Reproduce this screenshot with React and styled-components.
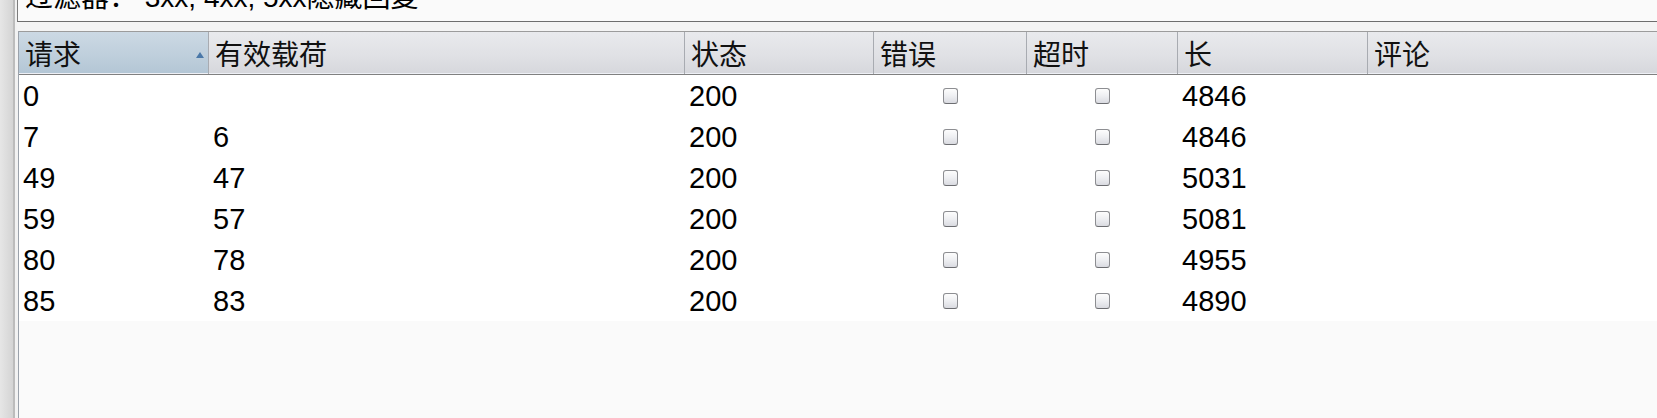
import React from "react"
import styled, { createGlobalStyle } from "styled-components"

const columns = [
  { key: "req", title: "请求", width: "190px", sorted: true },
  { key: "payload", title: "有效载荷", width: "476px" },
  { key: "status", title: "状态", width: "189px" },
  { key: "error", title: "错误", width: "153px", check: true },
  { key: "timeout", title: "超时", width: "151px", check: true },
  { key: "length", title: "长", width: "190px" },
  { key: "comment", title: "评论", width: "1fr" },
]

const rows = [
  { req: "0", payload: "", status: "200", length: "4846" },
  { req: "7", payload: "6", status: "200", length: "4846" },
  { req: "49", payload: "47", status: "200", length: "5031" },
  { req: "59", payload: "57", status: "200", length: "5081" },
  { req: "80", payload: "78", status: "200", length: "4955" },
  { req: "85", payload: "83", status: "200", length: "4890" },
]

const template = columns.map((c) => c.width).join(" ")

const App = () => {
  return (
    <>
      <GlobalStyle />
      <Window>
        <SideRail />
        <Main>
          <FilterBar>
            <FilterText>过滤器： 3xx, 4xx, 5xx隐藏回复</FilterText>
          </FilterBar>
          <Spacer />
          <Table>
            <HeaderRow>
              {columns.map((col) => (
                <HeaderCell key={col.key} sorted={col.sorted}>
                  {col.title}
                  {col.sorted ? <SortArrow /> : null}
                </HeaderCell>
              ))}
            </HeaderRow>
            {rows.map((row, index) => (
              <Row key={index}>
                {columns.map((col) =>
                  col.check ? (
                    <CheckCell key={col.key}>
                      <CheckBox />
                    </CheckCell>
                  ) : (
                    <Cell key={col.key}>{row[col.key]}</Cell>
                  )
                )}
              </Row>
            ))}
          </Table>
        </Main>
      </Window>
    </>
  )
}

export default App

const GlobalStyle = createGlobalStyle`
  body {
    margin: 0;
    background: #f0f0f0;
    font-family: "Liberation Sans", "Noto Sans CJK SC", sans-serif;
    overflow: hidden;
  }
`

const Window = styled.div`
  display: flex;
  width: 1657px;
  height: 418px;
  overflow: hidden;
`

const SideRail = styled.div`
  width: 17px;
  flex-shrink: 0;
  background: linear-gradient(
    to right,
    #e6e6e6 0px,
    #d4d4d4 13px,
    #bcbcbc 13px,
    #bcbcbc 15px,
    #f2f2f2 15px
  );
`

const Main = styled.div`
  flex: 1;
  display: flex;
  flex-direction: column;
  background: #f2f2f2;
  min-width: 0;
`

const FilterBar = styled.div`
  height: 21px;
  flex-shrink: 0;
  border-left: 1px solid #7c7c7c;
  border-bottom: 1px solid #6e6e6e;
  background: #fafafa;
  overflow: hidden;
  padding-left: 7px;
`

const FilterText = styled.div`
  font-size: 28px;
  line-height: 30px;
  margin-top: -17px;
  white-space: nowrap;
  color: #000;
`

const Spacer = styled.div`
  height: 9px;
  flex-shrink: 0;
  background: #f4f4f4;
`

const Table = styled.div`
  flex: 1;
  margin-left: 1px;
  border-left: 1px solid #9ba2ab;
  background: #fafafa;
`

const HeaderRow = styled.div`
  display: grid;
  grid-template-columns: ${template};
  height: 42px;
  border-top: 1px solid #9c9c9c;
  border-bottom: 1px solid #808080;
`

const HeaderCell = styled.div`
  position: relative;
  display: flex;
  align-items: center;
  padding-left: 6px;
  border-right: 1px solid #a8abb1;
  font-family: "Noto Sans CJK SC", sans-serif;
  font-size: 28px;
  color: #111;
  background: ${(p) =>
    p.sorted
      ? "linear-gradient(to bottom, #ccd9e4 0%, #bfcfdc 55%, #b3c6d5 100%)"
      : "linear-gradient(to bottom, #e9eaed 0%, #e0e1e5 55%, #d6d7dc 100%)"};
  box-shadow: inset 0 -1px 0 #eef0f6;
  &:last-child {
    border-right: none;
  }
`

const SortArrow = styled.span`
  position: absolute;
  right: 4px;
  top: 20px;
  width: 0;
  height: 0;
  border-left: 4px solid transparent;
  border-right: 4px solid transparent;
  border-bottom: 6px solid #4a78a8;
`

const Row = styled.div`
  display: grid;
  grid-template-columns: ${template};
  height: 41px;
  background: #ffffff;
`

const Cell = styled.div`
  display: flex;
  align-items: center;
  padding: 2px 0 0 4px;
  font-size: 29px;
  color: #000;
`

const CheckCell = styled.div`
  display: flex;
  align-items: center;
  justify-content: center;
`

const CheckBox = styled.span`
  width: 13px;
  height: 14px;
  border: 1px solid #8d8e92;
  border-bottom-color: #6c6d71;
  border-radius: 3px;
  background: linear-gradient(to bottom, #fdfdfd 0%, #eeeff2 50%, #dadbe1 100%);
`
